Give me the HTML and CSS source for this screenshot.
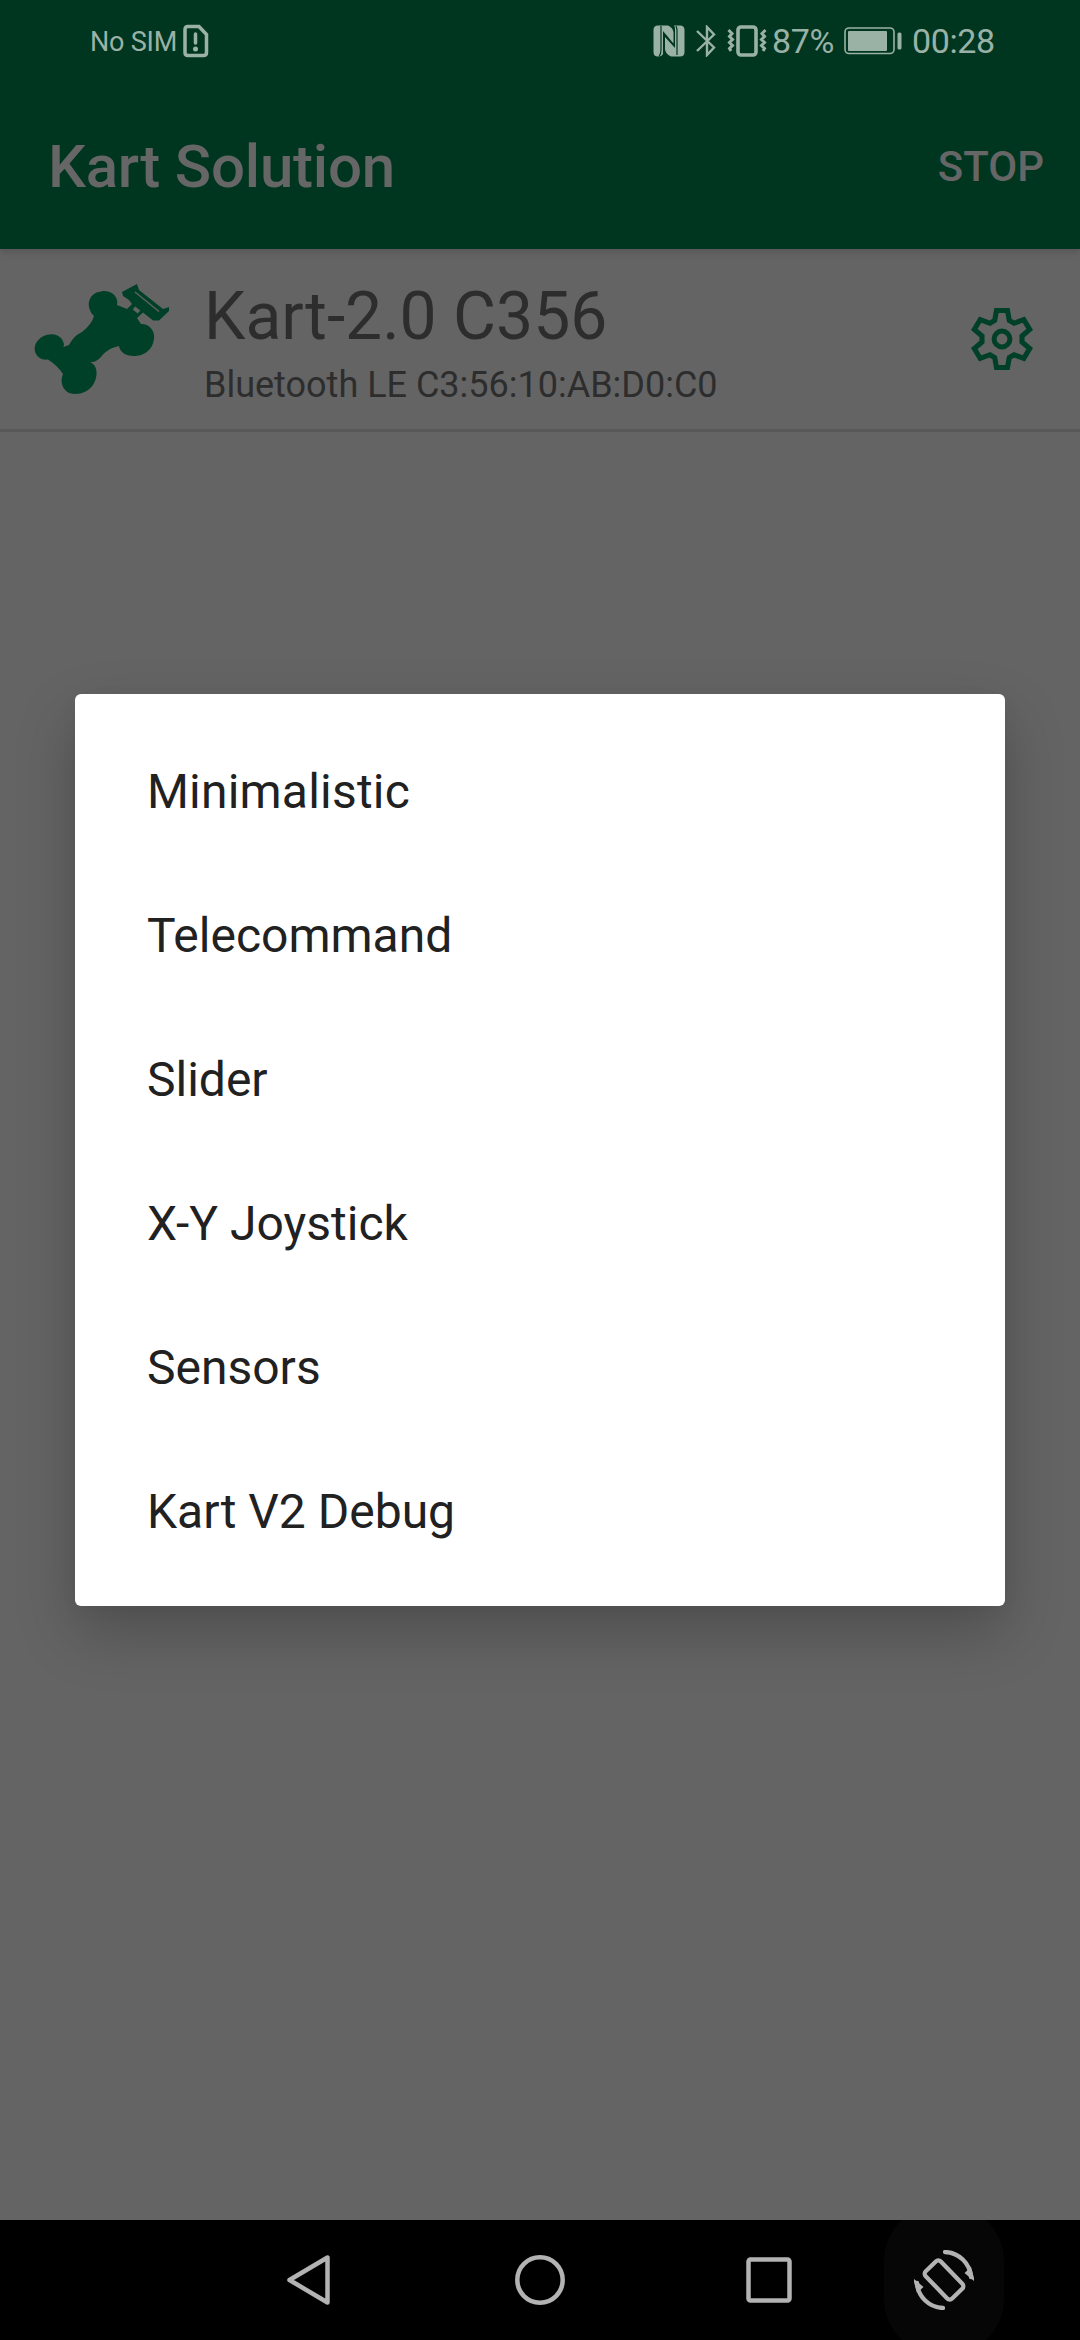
FILE: index.html
```
<!DOCTYPE html>
<html lang="en">
<head>
<meta charset="utf-8">
<title>Kart Solution</title>
<link rel="stylesheet" href="styles.css">
</head>
<body>
<div class="screen">
  <header class="top">
    <div class="status">
      <span class="sim">No SIM</span>
      <svg class="i-sim" width="26" height="34" viewBox="0 0 26 34"><path d="M5 2.500h11l7.500 8v18q0 3-3 3h-15.500q-3 0-3-3v-23q0-3 3-3z" fill="none" stroke="currentColor" stroke-width="3.500"/><path d="M12.500 10v9" stroke="currentColor" stroke-width="3.500" stroke-linecap="round"/><circle cx="12.500" cy="25" r="2.500" fill="currentColor"/></svg>
      <span class="grow"></span>
      <svg class="i-nfc" width="32" height="32" viewBox="0 0 32 32"><path fill="currentColor" d="M5 .5H8V31L6 31.500H5Q.5 31.500 .5 27V5Q.5.500 5 .5zM8 .5h7q5 2 5.500 7v11L10 6v23q-1 1.500-2 2zM12 12l10 11V4q0-2.500-1-3.500h6q4.500 0 4.500 4.500v22q0 4.500-4.500 4.500h-9q-5-2-6-7z"/><path d="M8 1v24q0 4-2 6.500M23 1q1.500 3 1 7v22" fill="none" stroke="#003620" stroke-width="1.200"/></svg>
      <svg class="i-bt" width="20" height="32" viewBox="0 0 20 32"><path d="M1 6l17 16.500-7 7.500V2l7 7.500L1 26" fill="none" stroke="currentColor" stroke-width="2.400"/></svg>
      <svg class="i-vib" width="40" height="32" viewBox="0 0 40 32"><rect x="11" y="2" width="18" height="28" rx="3" fill="none" stroke="currentColor" stroke-width="3.600"/><path d="M1.500 5L5 8.500 2.500 11.500 5.500 14.500 2.500 17.500 5.500 20.500 2.500 23.500 4 26M38.500 5L35 8.500l2.500 3-3 3 3 3-3 3 3 3L36 26" fill="none" stroke="currentColor" stroke-width="3"/></svg>
      <span class="num pct">87%</span>
      <svg class="i-bat" width="58" height="28" viewBox="0 0 58 28"><rect x="1" y="1" width="49" height="25.500" rx="4" fill="none" stroke="currentColor" stroke-width="1.600"/><rect x="4" y="4" width="39" height="20" rx="1" fill="currentColor"/><rect x="53.500" y="5.500" width="4" height="17" rx="1.500" fill="currentColor"/></svg>
      <span class="num time">00:28</span>
    </div>
    <div class="appbar"><h1 class="title">Kart Solution</h1><span class="stop">STOP</span></div>
  </header>
  <main class="content">
    <div class="device">
      <svg class="kart" width="145" height="120" viewBox="30 280 145 120"><path fill="#004029" d="M94 316C85 307 88 293 101 291.500C113 289 119 299 117 305L127 309L132 304L129 300L123 296L122 292L137 284L139 290L163 309L169 307V311L159 320.500H153L143 312.500L137 318L141 324C151 324 155 332 154 339C152 352 142 356 134 356C125 356 120 352 119 346C109 348 104 353 100 358Q96 362 90 362.500C97 364 98 374 95 381C91 391 82 394 75 394C64 394 59 383 63 374Q58 366 48 359.500C37 361 32 351 36 343C41 334 55 331 61 338Q65 343 63.500 347L69 345C73 338 76 335 82 332Q92 324 94 316Z"/><path d="M135 292l24 19.500" stroke="#646464" stroke-width="1.300"/><path d="M134 308l5 4" stroke="#646464" stroke-width="4"/></svg>
      <div class="info"><div class="name">Kart-2.0 C356</div><div class="addr">Bluetooth LE C3:56:10:AB:D0:C0</div></div>
      <svg class="gear" width="64" height="64" viewBox="-32 -32 64 64"><path d="M-5.500-28.500H5.500L7.300-18.500 12-15.700 21.800-19.300 27.700-9.500 20-3V3L27.700 9.500 21.800 19.300 12 15.700 7.300 18.500 5.500 28.500H-5.500L-7.300 18.500-12 15.700-21.800 19.300-27.700 9.500-20 3V-3L-27.700-9.500-21.800-19.300-12-15.700-7.300-18.500Z" fill="none" stroke="#004029" stroke-width="5.100"/><circle r="7.900" fill="none" stroke="#004029" stroke-width="5"/></svg>
    </div>
    <ul class="dialog">
      <li>Minimalistic</li><li>Telecommand</li><li>Slider</li><li>X-Y Joystick</li><li>Sensors</li><li>Kart V2 Debug</li>
    </ul>
  </main>
  <nav class="nav">
    <svg class="back" width="50" height="60" viewBox="0 0 50 60"><path d="M43.500 7.500v45L5.500 30z" fill="none" stroke="#b3b3b3" stroke-width="4.500" stroke-linejoin="round"/></svg>
    <svg class="home" width="60" height="60" viewBox="0 0 60 60"><circle cx="30" cy="30" r="22.700" fill="none" stroke="#b3b3b3" stroke-width="4.500"/></svg>
    <svg class="recent" width="60" height="60" viewBox="0 0 60 60"><rect x="9.500" y="9.500" width="41" height="41" rx="2" fill="none" stroke="#b3b3b3" stroke-width="4.500"/></svg>
    <div class="rotate"><svg width="60" height="60" viewBox="-30 -30 60 60" fill="none" stroke="#b3b3b3" stroke-width="4.300"><rect x="-19" y="-10.500" width="38" height="21" rx="3.500" transform="rotate(46)"/><path d="M1-28A27 27 0 0 1 27-3M-1 28A27 27 0 0 1-27 3" stroke-linecap="round"/><path d="M20.500-7l6.500-6 3 11v3zM-20.500 7l-6.500 6-3-11v-3z" fill="#b3b3b3" stroke="none"/></svg></div>
  </nav>
</div>
</body>
</html>
```
FILE: styles.css
```
* { box-sizing: border-box; margin: 0; padding: 0; }
body { width: 1080px; height: 2340px; background: #646464; font-family: Roboto, sans-serif; overflow: hidden; }
svg { display: block; flex: none; }
.screen { height: 2340px; display: flex; flex-direction: column; }
.top { height: 249px; background: #003620; box-shadow: 0 3px 8px rgba(0,0,0,.14); position: relative; }
.status { height: 81px; display: flex; align-items: center; padding: 0 85px 0 90px; color: #9ab2a6; white-space: nowrap; }
.sim { font-size: 27px; width: 93px; line-height: 36px; letter-spacing: -.2px; padding-top: 2px; }
.grow { flex: 1; }
.num { font-size: 34px; line-height: 40px; letter-spacing: -.4px; }
.i-nfc { margin-right: 11px; }
.i-bt { margin-right: 11px; }
.i-vib { margin-right: 5px; }
.pct { width: 72px; }
.time { width: 83px; margin-left: 10px; }
.appbar { height: 168px; padding: 3px 36px 0 48px; display: flex; align-items: center; justify-content: space-between; color: #666; }
.title { font-size: 60px; font-weight: 500; letter-spacing: -.2px; }
.stop { font-size: 42px; font-weight: 500; }
.content { flex: 1; }
.device { height: 183px; display: flex; border-bottom: 3px solid #585858; padding: 31px 46px 0 30px; }
.info { flex: 1; padding-left: 29px; color: #2d2d2d; white-space: nowrap; }
.name { font-size: 66px; line-height: 76px; margin-top: -1px; }
.addr { font-size: 36px; line-height: 42px; margin-top: 9px; }
.gear { margin-top: 27px; }
.dialog { list-style: none; width: 930px; height: 912px; margin: 262px auto 0; padding: 24px 0; background: #fff; border-radius: 6px; box-shadow: 0 26px 60px rgba(0,0,0,.22), 0 4px 20px rgba(0,0,0,.03); }
.dialog li { height: 144px; line-height: 144px; padding: 2px 72px 0; font-size: 48px; color: #212121; }
.dialog li:first-child { letter-spacing: .2px; }
.nav { height: 120px; background: #000; display: flex; align-items: center; padding-left: 284px; overflow: hidden; }
.home { margin-left: 176px; }
.recent { margin-left: 169px; }
.rotate { width: 120px; height: 150px; border-radius: 56px; background: #060606; margin-left: 85px; display: flex; align-items: center; justify-content: center; flex: none; }
```
